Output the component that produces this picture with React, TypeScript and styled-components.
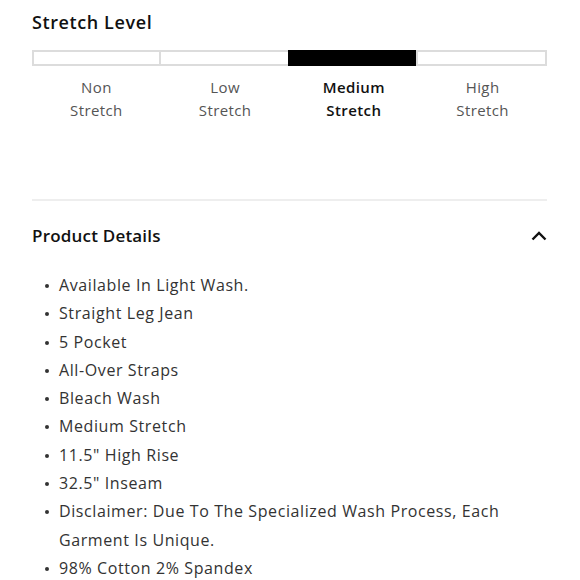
import React from "react";
import styled, { createGlobalStyle } from "styled-components";

const Global = createGlobalStyle`
  body {
    margin: 0;
    background: #fff;
    font-family: "Open Sans", "Liberation Sans", sans-serif;
  }
`;

const Page = styled.div`
  width: 580px;
  padding: 0 33px 0 32px;
  box-sizing: border-box;
  display: flex;
  flex-direction: column;
`;

const Title = styled.h2`
  margin: 10px 0 0;
  font-size: 18px;
  font-weight: 600;
  letter-spacing: 0.6px;
  line-height: 24px;
  color: #111;
`;

const Bar = styled.div`
  display: grid;
  grid-template-columns: repeat(4, 1fr);
  margin-top: 16px;
  height: 16px;
`;

const Segment = styled.div<{ $active?: boolean }>`
  box-sizing: border-box;
  border: 2px solid ${(p) => (p.$active ? "#000" : "#dcdcdc")};
  margin-left: -2px;
  background: ${(p) => (p.$active ? "#000" : "#fff")};
  &:first-child {
    margin-left: 0;
  }
`;

const Labels = styled.div`
  display: grid;
  grid-template-columns: repeat(4, 1fr);
  margin-top: 10px;
`;

const Label = styled.div<{ $active?: boolean }>`
  text-align: center;
  font-size: 15px;
  letter-spacing: 0.4px;
  line-height: 23px;
  color: ${(p) => (p.$active ? "#111" : "#555")};
  font-weight: ${(p) => (p.$active ? 600 : 400)};
`;

const Divider = styled.hr`
  border: 0;
  height: 2px;
  background: #eeeeee;
  margin: 77px 0 0;
`;

const Header = styled.div`
  display: flex;
  align-items: center;
  justify-content: space-between;
  margin-top: 23px;
`;

const HeaderTitle = styled.h3`
  margin: 0;
  font-size: 17px;
  font-weight: 600;
  letter-spacing: 0.2px;
  line-height: 24px;
  color: #111;
`;

const List = styled.ul`
  margin: 23px 0 0;
  padding: 0 0 0 27px;
  list-style: none;
`;

const Item = styled.li`
  position: relative;
  font-size: 16px;
  letter-spacing: 0.6px;
  line-height: 28.3px;
  color: #333;
  &::before {
    content: "";
    position: absolute;
    left: -14px;
    top: 13px;
    width: 4px;
    height: 4px;
    border-radius: 50%;
    background: #333;
  }
`;

const levels = [
  ["Non", "Stretch"],
  ["Low", "Stretch"],
  ["Medium", "Stretch"],
  ["High", "Stretch"],
];

const details = [
  "Available In Light Wash.",
  "Straight Leg Jean",
  "5 Pocket",
  "All-Over Straps",
  "Bleach Wash",
  "Medium Stretch",
  '11.5" High Rise',
  '32.5" Inseam',
  "Disclaimer: Due To The Specialized Wash Process, Each Garment Is Unique.",
  "98% Cotton 2% Spandex",
];

const active = 2;

export default function App() {
  return (
    <Page>
      <Global />
      <Title>Stretch Level</Title>
      <Bar>
        {levels.map((_, i) => (
          <Segment key={i} $active={i === active} />
        ))}
      </Bar>
      <Labels>
        {levels.map((l, i) => (
          <Label key={i} $active={i === active}>
            {l[0]}
            <br />
            {l[1]}
          </Label>
        ))}
      </Labels>
      <Divider />
      <Header>
        <HeaderTitle>Product Details</HeaderTitle>
        <svg width="16" height="10" viewBox="0 0 16 10" fill="none">
          <path d="M1.5 8.5 L8 2 L14.5 8.5" stroke="#111" strokeWidth="2.4" />
        </svg>
      </Header>
      <List>
        {details.map((d) => (
          <Item key={d}>{d}</Item>
        ))}
      </List>
    </Page>
  );
}
